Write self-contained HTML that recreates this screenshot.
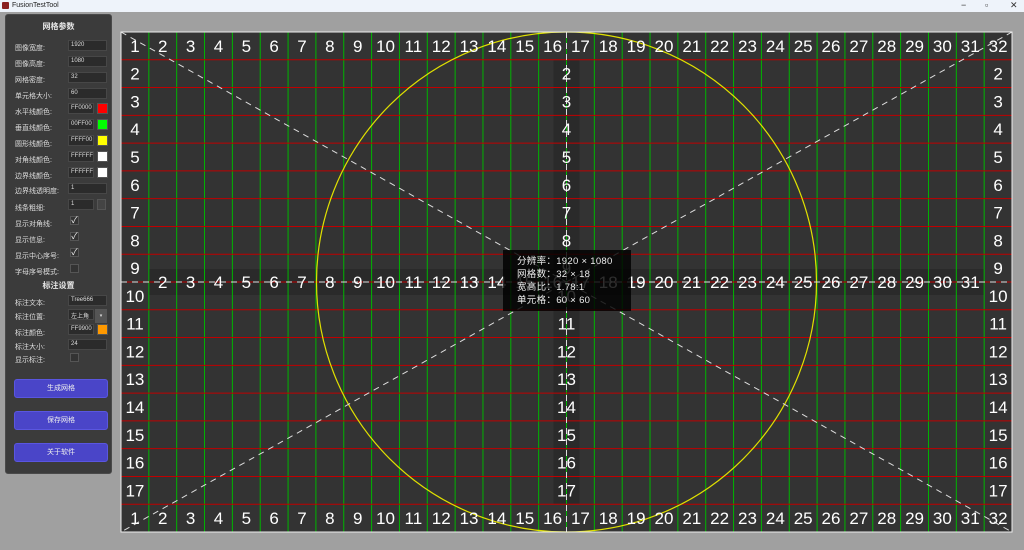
<!DOCTYPE html>
<html><head><meta charset="utf-8">
<style>
*{margin:0;padding:0;box-sizing:border-box}
body{width:1024px;height:550px;background:#a0a0a0;position:relative;overflow:hidden;font-family:"Liberation Sans","Noto Sans CJK SC",sans-serif}
#tb{position:absolute;left:0;top:0;width:1024px;height:12px;background:#eef3fa;font-size:7px;color:#222}
#tb .ic{position:absolute;left:2px;top:2px;width:7px;height:7px;background:#8a2020;border-radius:1px}
#tb .t{position:absolute;left:12px;top:2px}
#tb .c{position:absolute;top:0px;font-size:9px;color:#333}
#panel{position:absolute;left:5px;top:14px;width:107px;height:460px;background:#3b3b3b;border:1px solid #4a4a4a;border-radius:3px;color:#ddd;font-size:7px}
.h{position:absolute;left:0;width:105px;text-align:center;font-size:8px;font-weight:bold;color:#e8e8e8}
.l{position:absolute;left:9px}
.i{position:absolute;left:62px;width:39px;height:11px;background:#2b2b2b;border:1px solid #474747;padding:1px 2px;font-size:6px;color:#ddd}
.i.s{width:26px}
.sw{position:absolute;left:91px;width:11px;height:11px;border:1px solid #555}
.cb{position:absolute;left:64px;width:9px;height:9px;border:1px solid #555;background:#333;color:#eee;font-size:9px;line-height:7px;text-align:center}
.b{position:absolute;left:8px;width:94px;height:19px;background:#4a45c8;border:1px solid #5a56e0;border-radius:3px;color:#eee;text-align:center;line-height:17px;font-size:7px}
#info{position:absolute;left:503px;top:250px;width:128px;height:61px;background:rgba(0,0,0,0.82);color:#eee;font-size:9.5px;line-height:13px;padding:5px 14px;white-space:nowrap;letter-spacing:0.3px}
</style></head><body>
<div id="tb"><div class="ic"></div><div class="t">FusionTestTool</div><span class="c" style="left:961px">−</span><span class="c" style="left:985px">▫</span><span class="c" style="left:1010px">✕</span></div>
<div id="panel">
<div class="h" style="top:6px">网格参数</div>
<div class="l" style="top:28px">图像宽度:</div><div class="i" style="top:25px">1920</div>
<div class="l" style="top:44px">图像高度:</div><div class="i" style="top:41px">1080</div>
<div class="l" style="top:60px">网格密度:</div><div class="i" style="top:57px">32</div>
<div class="l" style="top:76px">单元格大小:</div><div class="i" style="top:73px">60</div>
<div class="l" style="top:92px">水平线颜色:</div><div class="i s" style="top:88px">FF0000</div><div class="sw" style="top:88px;background:#ff0000"></div>
<div class="l" style="top:108px">垂直线颜色:</div><div class="i s" style="top:104px">00FF00</div><div class="sw" style="top:104px;background:#00ff00"></div>
<div class="l" style="top:124px">圆形线颜色:</div><div class="i s" style="top:120px">FFFF00</div><div class="sw" style="top:120px;background:#ffff00"></div>
<div class="l" style="top:140px">对角线颜色:</div><div class="i s" style="top:136px">FFFFFF</div><div class="sw" style="top:136px;background:#fff"></div>
<div class="l" style="top:156px">边界线颜色:</div><div class="i s" style="top:152px">FFFFFF</div><div class="sw" style="top:152px;background:#fff"></div>
<div class="l" style="top:171px">边界线透明度:</div><div class="i" style="top:168px">1</div>
<div class="l" style="top:188px">线条粗细:</div><div class="i s" style="top:184px">1</div><div style="position:absolute;left:91px;top:184px;width:9px;height:11px;background:#444;border:1px solid #555"></div>
<div class="l" style="top:204px">显示对角线:</div><div class="cb" style="top:201px">✓</div>
<div class="l" style="top:220px">显示信息:</div><div class="cb" style="top:217px">✓</div>
<div class="l" style="top:236px">显示中心序号:</div><div class="cb" style="top:233px">✓</div>
<div class="l" style="top:252px">字母序号模式:</div><div class="cb" style="top:249px;color:transparent"></div>
<div class="h" style="top:265px">标注设置</div>
<div class="l" style="top:283px">标注文本:</div><div class="i" style="top:280px">Tree666</div>
<div class="l" style="top:297px">标注位置:</div><div class="i s" style="top:294px">左上角</div><div style="position:absolute;left:89px;top:294px;width:12px;height:14px;background:#555;color:#ddd;font-size:5px;text-align:center;line-height:14px">▾</div>
<div class="l" style="top:313px">标注颜色:</div><div class="i s" style="top:309px">FF9900</div><div class="sw" style="top:309px;background:#ff9900"></div>
<div class="l" style="top:327px">标注大小:</div><div class="i" style="top:324px">24</div>
<div class="l" style="top:340px">显示标注:</div><div class="cb" style="top:338px;color:transparent"></div>
<div class="b" style="top:364px">生成网格</div>
<div class="b" style="top:396px">保存网格</div>
<div class="b" style="top:428px">关于软件</div>
</div>
<svg id="g" style="position:absolute;left:0;top:0" width="1024" height="550"></svg>
<div id="info">分辨率：1920 × 1080<br>网格数：32 × 18<br>宽高比：1.78:1<br>单元格：60 × 60</div>
<script>
var X0=121,Y0=32,W=891,H=500,cw=W/32,ch=H/18,cx=X0+W/2,cy=Y0+H/2;
var s='<rect x="'+X0+'" y="'+Y0+'" width="'+W+'" height="'+H+'" fill="#333"/>';
s+='<rect x="'+(cx-13)+'" y="'+(Y0+ch)+'" width="26" height="'+(H-2*ch)+'" fill="#2a2a2a"/>';
s+='<rect x="'+(X0+cw)+'" y="'+(cy-13)+'" width="'+(W-2*cw)+'" height="26" fill="#2a2a2a"/>';
for(var i=1;i<32;i++){var x=X0+i*cw;s+='<line x1="'+x+'" y1="'+Y0+'" x2="'+x+'" y2="'+(Y0+H)+'" stroke="#00b400" stroke-width="1"/>';}
for(var j=1;j<18;j++){var y=Y0+j*ch;s+='<line x1="'+X0+'" y1="'+y+'" x2="'+(X0+W)+'" y2="'+y+'" stroke="#c00000" stroke-width="1"/>';}
s+='<circle cx="'+cx+'" cy="'+cy+'" r="250" fill="none" stroke="#e0e000" stroke-width="1.2"/>';
var d='stroke="#ddd" stroke-width="1" stroke-dasharray="6,5"';
s+='<line x1="'+X0+'" y1="'+Y0+'" x2="'+(X0+W)+'" y2="'+(Y0+H)+'" '+d+'/>';
s+='<line x1="'+(X0+W)+'" y1="'+Y0+'" x2="'+X0+'" y2="'+(Y0+H)+'" '+d+'/>';
s+='<line x1="'+cx+'" y1="'+Y0+'" x2="'+cx+'" y2="'+(Y0+H)+'" '+d+'/>';
s+='<line x1="'+X0+'" y1="'+cy+'" x2="'+(X0+W)+'" y2="'+cy+'" '+d+'/>';
function t(x,y,v){s+='<text x="'+x+'" y="'+(y+6)+'" text-anchor="middle" font-family="Liberation Sans" font-size="17" fill="#fff">'+v+'</text>';}
for(var i=0;i<32;i++){var x=X0+(i+.5)*cw;t(x,Y0+ch/2,i+1);t(x,Y0+H-ch/2,i+1);}
for(var j=1;j<17;j++){var y=Y0+(j+.5)*ch;t(X0+cw/2,y,j+1);t(X0+W-cw/2,y,j+1);t(cx,y,j+1);}
for(var i=1;i<31;i++){t(X0+(i+.5)*cw,cy,i+1);}
s+='<rect x="'+X0+'" y="'+Y0+'" width="'+W+'" height="'+H+'" fill="none" stroke="#eee" stroke-width="1"/>';
document.getElementById('g').innerHTML=s;
</script>
</body></html>
